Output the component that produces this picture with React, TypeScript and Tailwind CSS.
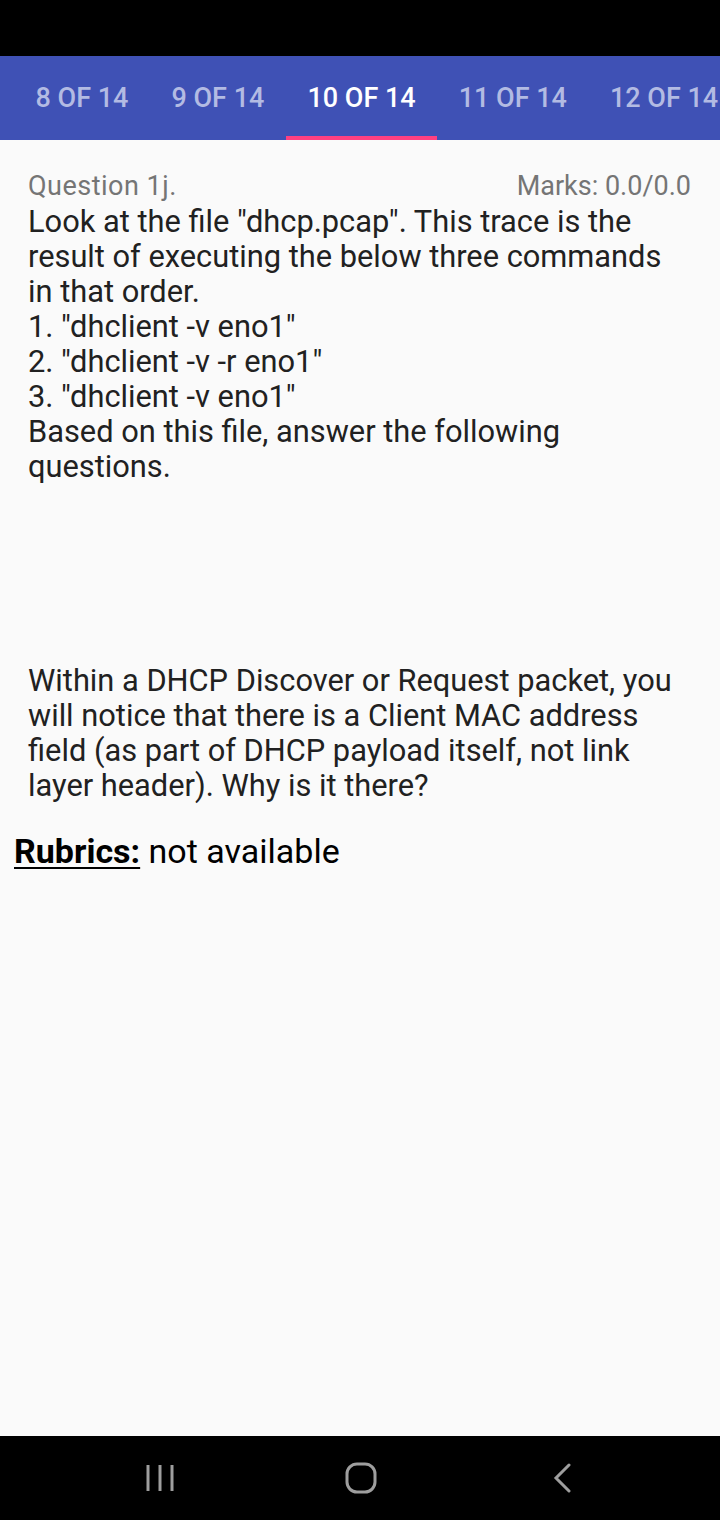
import React from "react";

const TABS = ["8 OF 14", "9 OF 14", "10 OF 14", "11 OF 14", "12 OF 14"];
const ACTIVE = "10 OF 14";

const QUESTION_LINES = [
  'Look at the file "dhcp.pcap". This trace is the',
  "result of executing the below three commands",
  "in that order.",
  '1. "dhclient -v eno1"',
  '2. "dhclient -v -r eno1"',
  '3. "dhclient -v eno1"',
  "Based on this file, answer the following",
  "questions.",
];

const SUB_LINES = [
  "Within a DHCP Discover or Request packet, you",
  "will notice that there is a Client MAC address",
  "field (as part of DHCP payload itself, not link",
  "layer header). Why is it there?",
];

function TabBar(): React.ReactElement {
  return (
    <div className="h-[84px] bg-[#3f51b5] flex overflow-hidden pl-[14px] shrink-0">
      {TABS.map((tab) => (
        <div
          key={tab}
          className={`relative shrink-0 px-[21.5px] flex items-center justify-center text-[27px] font-medium whitespace-nowrap ${
            tab === ACTIVE ? "text-white" : "text-[#b3bbe3]"
          }`}
        >
          {tab}
          {tab === ACTIVE && (
            <span className="absolute left-0 right-0 bottom-0 h-[4px] bg-[#ff4081]" />
          )}
        </div>
      ))}
    </div>
  );
}

function NavBar(): React.ReactElement {
  return (
    <div className="h-[84px] bg-black flex items-center pl-[145px] shrink-0">
      <svg width="30" height="30" viewBox="0 0 30 30" fill="none" stroke="#9e9e9e" strokeWidth="3">
        <line x1="3" y1="2" x2="3" y2="28" />
        <line x1="15" y1="2" x2="15" y2="28" />
        <line x1="27" y1="2" x2="27" y2="28" />
      </svg>
      <svg className="ml-[170px]" width="32" height="32" viewBox="0 0 32 32" fill="none" stroke="#9e9e9e" strokeWidth="3">
        <rect x="2" y="2" width="28" height="28" rx="10" />
      </svg>
      <svg className="ml-[176px]" width="20" height="30" viewBox="0 0 20 30" fill="none" stroke="#9e9e9e" strokeWidth="3" strokeLinecap="round">
        <polyline points="16,2 3,15 16,28" />
      </svg>
    </div>
  );
}

export default function App(): React.ReactElement {
  return (
    <div
      className="w-[720px] h-[1520px] flex flex-col bg-[#fafafa] overflow-hidden"
      style={{ fontFamily: "Roboto, 'Noto Sans', sans-serif" }}
    >
      {/* Status bar */}
      <div className="h-[56px] bg-black shrink-0" />
      <TabBar />

      {/* Content */}
      <main className="flex-1 pt-[29px]">
        <div className="pl-[28px] pr-[29px]">
          <div className="flex justify-between text-[27px] leading-[35px] text-[#757575]">
            <span className="tracking-[0.5px]">Question 1j.</span>
            <span>Marks: 0.0/0.0</span>
          </div>
          <div className="text-[30.8px] leading-[35px] text-[#212121] whitespace-nowrap">
            {QUESTION_LINES.map((l) => (
              <div key={l}>{l}</div>
            ))}
          </div>
          <div className="mt-[179px] text-[30.8px] leading-[35px] text-[#212121] whitespace-nowrap">
            {SUB_LINES.map((l) => (
              <div key={l}>{l}</div>
            ))}
          </div>
        </div>
        <div className="pl-[14px] mt-[28px] text-[34px] leading-[40px] text-black">
          <span className="font-bold underline underline-offset-[4px] decoration-[2px]">Rubrics:</span>{" "}
          not available
        </div>
      </main>

      <NavBar />
    </div>
  );
}
